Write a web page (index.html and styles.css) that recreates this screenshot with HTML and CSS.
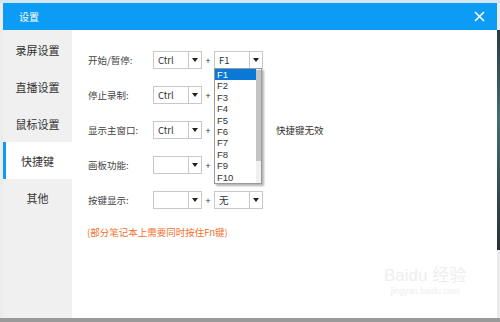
FILE: index.html
```html
<!DOCTYPE html>
<html lang="zh-CN">
<head>
  <meta charset="UTF-8">
  <title>设置</title>
  <link rel="stylesheet" href="styles.css">
</head>
<body>
  <div class="screen">
    <div class="dialog">
      <div class="titlebar">
        <span class="title">设置</span>
        <svg class="close" width="11" height="11" viewBox="0 0 11 11">
          <path d="M1 1 L10 10 M10 1 L1 10" stroke="#fff" stroke-width="1.6"/>
        </svg>
      </div>
      <div class="body">
        <ul class="sidebar">
          <li>录屏设置</li>
          <li>直播设置</li>
          <li>鼠标设置</li>
          <li class="active">快捷键</li>
          <li>其他</li>
        </ul>
        <div class="content">
          <div class="row">
            <span class="label">开始/暂停:</span>
            <div class="select"><span class="value">Ctrl</span><span class="arrow"></span></div>
            <span class="plus">+</span>
            <div class="select"><span class="value">F1</span><span class="arrow"></span></div>
          </div>
          <div class="row">
            <span class="label">停止录制:</span>
            <div class="select"><span class="value">Ctrl</span><span class="arrow"></span></div>
            <span class="plus">+</span>
            <div class="select covered"></div>
          </div>
          <div class="row">
            <span class="label">显示主窗口:</span>
            <div class="select"><span class="value">Ctrl</span><span class="arrow"></span></div>
            <span class="plus">+</span>
            <div class="select covered"></div>
            <span class="warn">快捷键无效</span>
          </div>
          <div class="row">
            <span class="label">画板功能:</span>
            <div class="select"><span class="value"></span><span class="arrow"></span></div>
            <span class="plus">+</span>
            <div class="select covered"></div>
          </div>
          <div class="row">
            <span class="label">按键显示:</span>
            <div class="select"><span class="value"></span><span class="arrow"></span></div>
            <span class="plus">+</span>
            <div class="select"><span class="value">无</span><span class="arrow"></span></div>
          </div>
          <p class="note">(部分笔记本上需要同时按住Fn键)</p>

          <div class="dropdown">
            <ul class="options">
              <li class="selected">F1</li>
              <li>F2</li>
              <li>F3</li>
              <li>F4</li>
              <li>F5</li>
              <li>F6</li>
              <li>F7</li>
              <li>F8</li>
              <li>F9</li>
              <li>F10</li>
            </ul>
            <div class="scrollbar"><div class="thumb"></div></div>
          </div>

          <div class="watermark">
            <div class="wm-logo">Baidu 经验</div>
            <div class="wm-url">jingyan.baidu.com</div>
          </div>
        </div>
      </div>
    </div>
  </div>
</body>
</html>
```

FILE: styles.css
```css
body {
  margin: 0;
  font-family: "Noto Sans CJK SC", "Noto Sans", sans-serif;
  background-color: #e6e6e6;
}
.screen {
  width: 500px;
  height: 322px;
  box-sizing: border-box;
  padding: 3px 3px 4px 3px;
  background: linear-gradient(to bottom, #d4e6f2 0, #d4e6f2 3px, #ececec 3px, #ececec 318px, #9a9a9a 318px);
  position: relative;
}
.screen::after {
  content: "";
  position: absolute;
  top: 30px;
  right: 0;
  width: 3px;
  height: 220px;
  background: linear-gradient(to bottom, #2d3a3e, #3f6f73 40%, #2a2f33);
}
.dialog {
  height: 100%;
  display: flex;
  flex-direction: column;
  background-color: #fff;
}
.titlebar {
  height: 27px;
  flex: none;
  display: flex;
  align-items: center;
  justify-content: space-between;
  padding: 0 12px 0 16px;
  background-color: #0c9cf6;
  color: #fff;
}
.title {
  font-size: 10px;
}
.close {
  display: block;
}
.body {
  flex: 1;
  display: flex;
}
.sidebar {
  width: 69px;
  margin: 0;
  padding: 1px 0 0 0;
  list-style: none;
  background-color: #f0f0f0;
}
.sidebar li {
  height: 37px;
  display: flex;
  align-items: center;
  justify-content: center;
  font-size: 11px;
  color: #333;
  box-sizing: border-box;
}
.sidebar li.active {
  background-color: #fff;
  border-left: 3px solid #0c9cf6;
  padding-right: 3px;
}
.content {
  flex: 1;
  position: relative;
  padding: 21px 0 0 16px;
}
.row {
  height: 18px;
  margin-bottom: 17px;
  display: flex;
  align-items: center;
}
.label {
  width: 65px;
  font-size: 9.5px;
  color: #444;
}
.select {
  width: 49px;
  height: 18px;
  box-sizing: border-box;
  border: 1px solid #c8c8c8;
  display: flex;
  background-color: #fff;
}
.select.covered {
  visibility: hidden;
}
.select .value {
  flex: 1;
  font-size: 9.5px;
  line-height: 16px;
  padding-left: 4px;
  color: #333;
}
.select .arrow {
  width: 12px;
  border-left: 1px solid #c8c8c8;
  position: relative;
}
.select .arrow::after {
  content: "";
  position: absolute;
  left: 3px;
  top: 6px;
  border-left: 3px solid transparent;
  border-right: 3px solid transparent;
  border-top: 4px solid #222;
}
.plus {
  width: 12px;
  text-align: center;
  font-size: 9px;
  color: #333;
}
.warn {
  margin-left: 13px;
  font-size: 9.5px;
  color: #333;
}
.note {
  margin: 1px 0 0 -1px;
  font-size: 9.5px;
  line-height: 12px;
  color: #f2702c;
}
.dropdown {
  position: absolute;
  left: 142px;
  top: 38px;
  width: 48px;
  height: 116px;
  box-sizing: border-box;
  border: 1px solid #9a9a9a;
  background-color: #fff;
  box-shadow: 2px 2px 2px rgba(0, 0, 0, 0.3);
  display: flex;
}
.options {
  flex: 1;
  margin: 0;
  padding: 0;
  list-style: none;
  font-family: "Liberation Sans", sans-serif;
}
.options li {
  height: 11.4px;
  line-height: 11.4px;
  font-size: 9.5px;
  padding-left: 2px;
  color: #333;
}
.options li.selected {
  background-color: #0a78d7;
  color: #fff;
}
.scrollbar {
  width: 5px;
  background-color: #f0f0f0;
  padding-top: 1px;
}
.thumb {
  height: 91px;
  background-color: #c4c4c4;
}
.watermark {
  position: absolute;
  left: 312px;
  top: 236px;
  color: #eeeeee;
  text-align: center;
  font-family: "Liberation Sans", "Noto Sans CJK SC", sans-serif;
}
.wm-logo {
  font-size: 17px;
  line-height: 20px;
}
.wm-url {
  font-size: 8.5px;
}
```
